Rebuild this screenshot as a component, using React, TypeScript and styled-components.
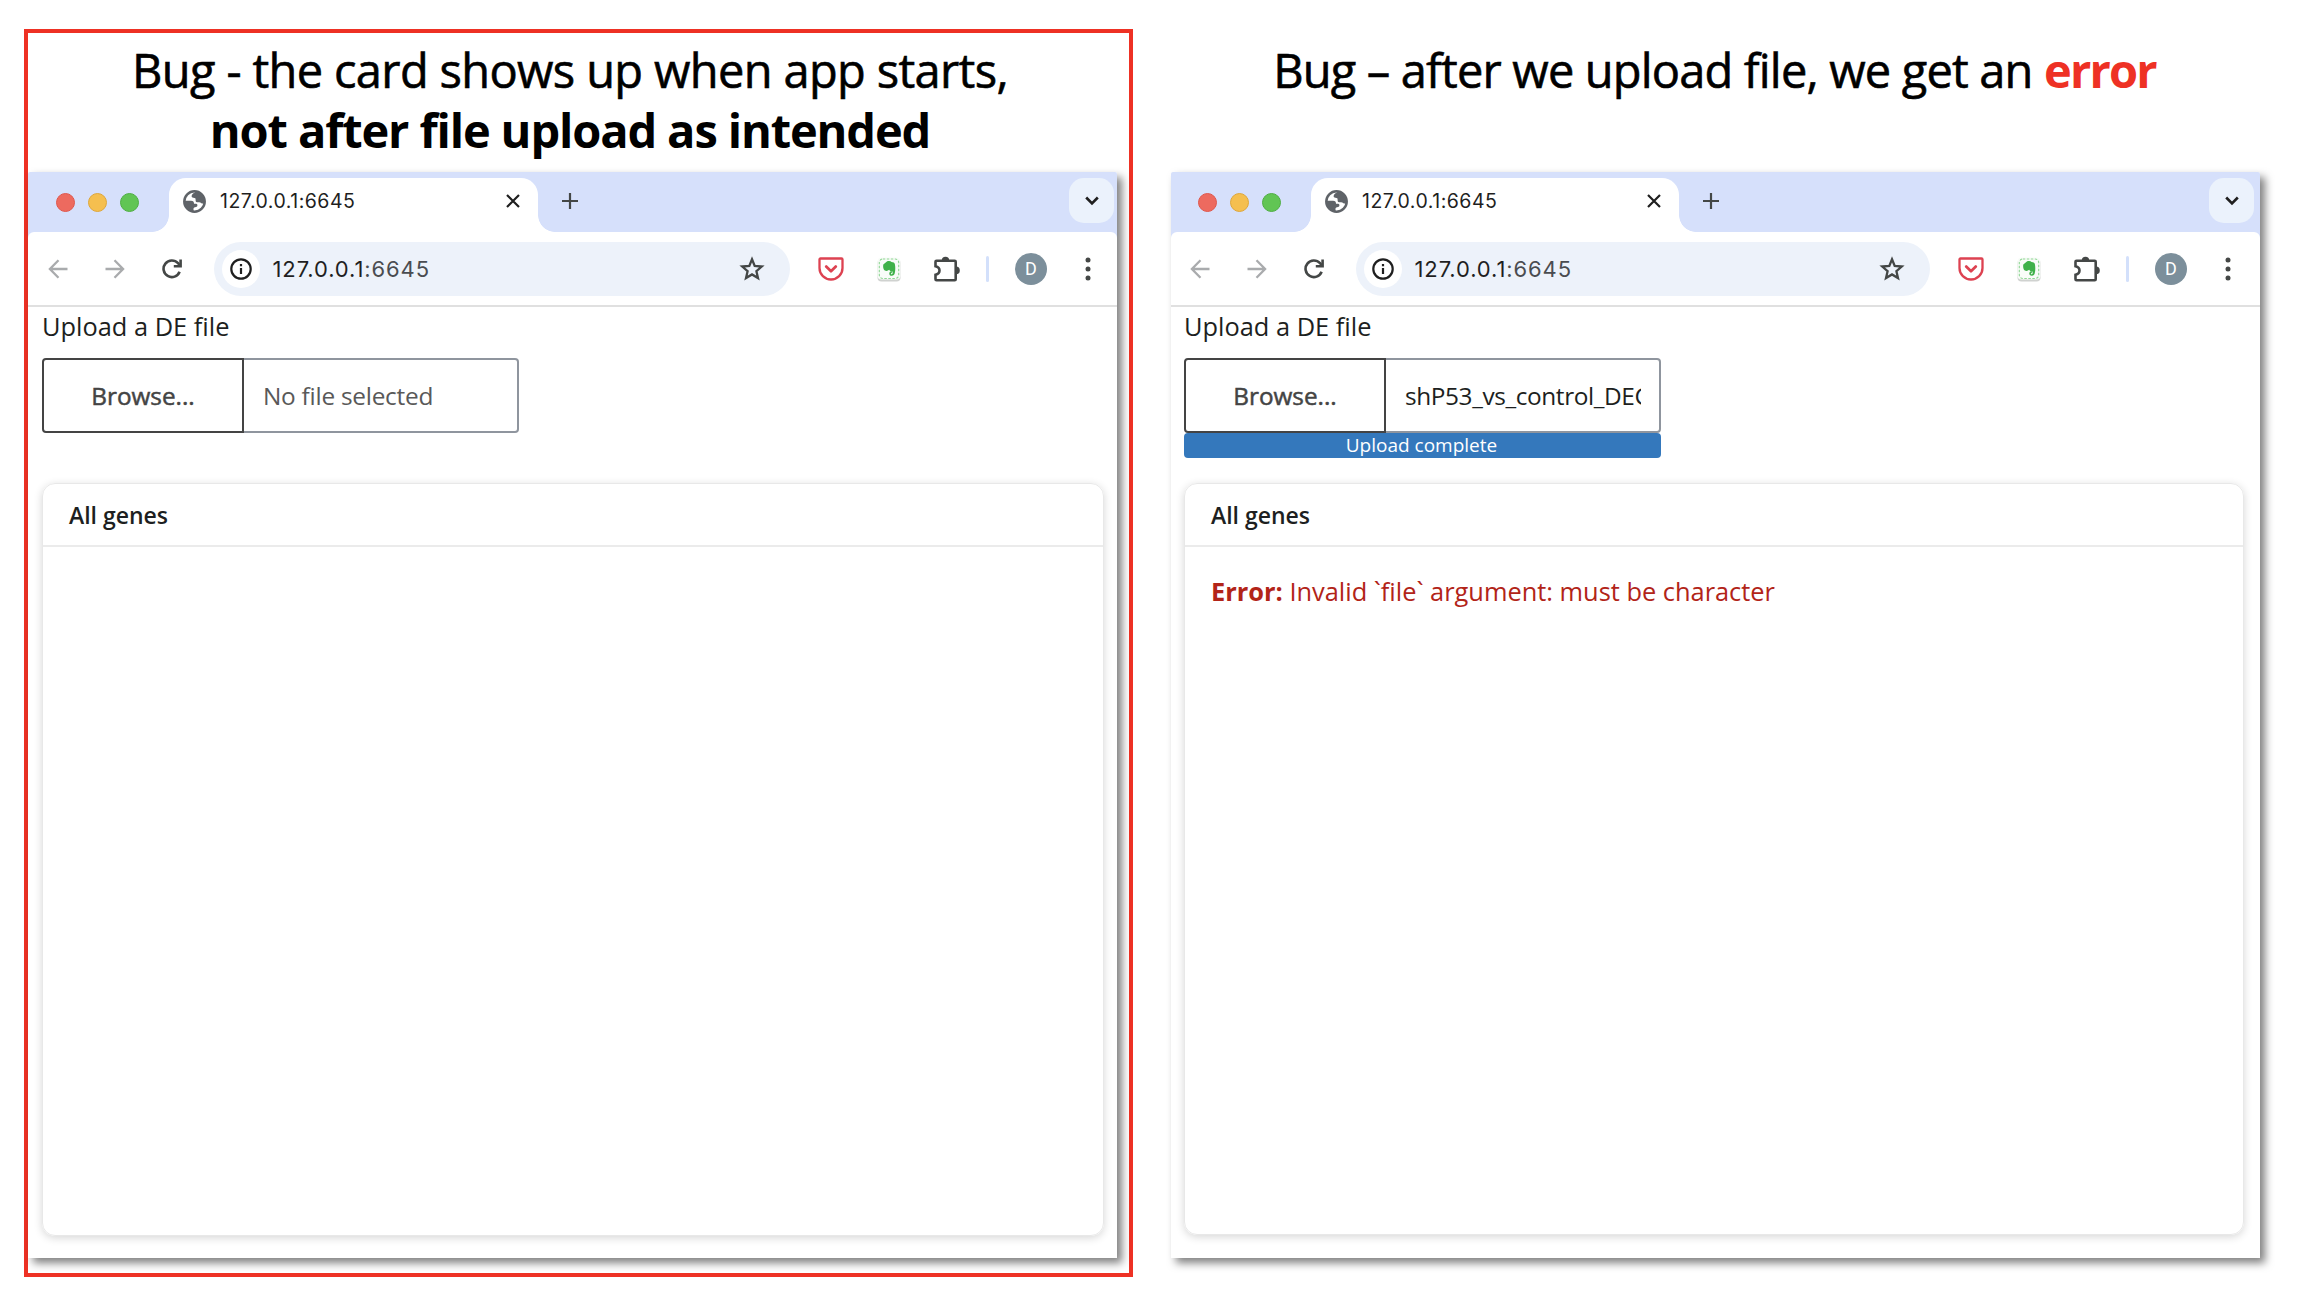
import React from "react";
import styled, { createGlobalStyle } from "styled-components";

const Global = createGlobalStyle`
  * { box-sizing: border-box; }
  body { margin: 0; background: #fff; }
`;

const Slide = styled.main`
  display: flex;
  width: 2300px;
  height: 1290px;
  padding: 29px 0 13px 24px;
  gap: 34px;
  background: #fff;
  overflow: hidden;
  font-family: "Open Sans", "Noto Sans", sans-serif;
`;

const Panel = styled.section<{ $framed?: boolean }>`
  display: flex;
  flex-direction: column;
  width: 1109px;
  height: 1248px;
  border: 4px solid ${(p) => (p.$framed ? "#ee3124" : "transparent")};
`;

const Heading = styled.header<{ $inset: number }>`
  display: flex;
  flex-direction: column;
  align-items: center;
  height: 139px;
  padding: 7px ${(p) => p.$inset}px 0 0;
  color: #000;
`;

const Line = styled.div<{ $track: number; $bold?: boolean }>`
  height: 60px;
  line-height: 60px;
  font-size: 47px;
  white-space: pre;
  font-weight: ${(p) => (p.$bold ? 700 : 400)};
  letter-spacing: ${(p) => p.$track}px;
  -webkit-text-stroke: ${(p) => (p.$bold ? 0 : 0.6)}px #000;
`;

const Alert = styled.b`
  color: #ee3124;
  letter-spacing: -1.8px;
  -webkit-text-stroke: 0;
`;

const Window = styled.div`
  display: flex;
  flex-direction: column;
  width: 1089px;
  height: 1086px;
  border-radius: 2px 2px 0 0;
  background: #fff;
  box-shadow: 5px 5px 9px rgba(0, 0, 0, 0.5);
`;

const Chrome = styled.div`
  border-radius: 2px 2px 0 0;
  background: #d6e0fb;
`;

const TabStrip = styled.div`
  display: flex;
  height: 60px;
`;

const Lights = styled.div<{ $shift: number }>`
  display: flex;
  align-items: center;
  gap: 13px;
  width: ${(p) => 141 - p.$shift}px;
  padding-left: ${(p) => 28 - p.$shift}px;
`;

const Light = styled.span<{ $c: string; $b: string }>`
  width: 19px;
  height: 19px;
  border-radius: 50%;
  background: ${(p) => p.$c};
  border: 1px solid ${(p) => p.$b};
`;

const Tab = styled.div<{ $shift: number }>`
  position: relative;
  display: flex;
  align-items: center;
  width: ${(p) => 369 - p.$shift}px;
  height: 54px;
  margin-top: 6px;
  padding: 0 18px 8px 14px;
  border-radius: 17px 17px 0 0;
  background: #fff;
  &::before,
  &::after {
    content: "";
    position: absolute;
    bottom: 0;
    width: 17px;
    height: 17px;
  }
  &::before {
    left: -17px;
    background: radial-gradient(circle at 0 0, transparent 16.5px, #fff 17.2px);
  }
  &::after {
    right: -17px;
    background: radial-gradient(circle at 100% 0, transparent 16.5px, #fff 17.2px);
  }
`;

const TabTitle = styled.span`
  flex: 1;
  margin-left: 14px;
  font: 400 19.5px/24px Inter, sans-serif;
  letter-spacing: 0.5px;
  color: #1f1f1f;
`;

const NewTab = styled.div`
  display: flex;
  align-items: center;
  flex: 1;
  padding: 0 0 3px 24px;
`;

const TabSearch = styled.div<{ $edge: number }>`
  display: flex;
  align-items: center;
  justify-content: center;
  width: 45px;
  height: 45px;
  margin: 6px ${(p) => p.$edge}px 0 0;
  border-radius: 15px;
  background: #ebf2fc;
`;

const Toolbar = styled.div<{ $edge: number; $shift: number }>`
  display: flex;
  align-items: center;
  height: 75px;
  padding: 1px ${(p) => p.$edge}px 0 ${(p) => 20 - p.$shift}px;
  border-bottom: 2px solid #e0e0e0;
  border-radius: 6px 6px 0 0;
  background: #fff;
`;

const Nav = styled.div`
  display: flex;
  justify-content: space-between;
  width: 134px;
  margin-right: 32px;
`;

const Omnibox = styled.div`
  display: flex;
  align-items: center;
  flex: 1;
  height: 54px;
  padding: 0 25px 0 8px;
  border-radius: 27px;
  background: #edf2fa;
`;

const SiteInfo = styled.span`
  display: flex;
  align-items: center;
  justify-content: center;
  width: 38px;
  height: 38px;
  border-radius: 50%;
  background: #fff;
`;

const Address = styled.span`
  flex: 1;
  margin-left: 12.5px;
  font: 400 22px/28px Inter, sans-serif;
  letter-spacing: 0.9px;
  color: #1f1f1f;
`;

const Port = styled.span`
  color: #4a4c50;
`;

const Actions = styled.div`
  display: flex;
  align-items: center;
  width: 304px;
  padding-left: 28px;
`;

const Divider = styled.span`
  width: 3px;
  height: 26px;
  margin: 0 26px 0 25px;
  border-radius: 2px;
  background: #d3e0fb;
`;

const Avatar = styled.span`
  display: flex;
  align-items: center;
  justify-content: center;
  width: 32px;
  height: 32px;
  margin-right: 38px;
  border-radius: 50%;
  background: #7c8f9b;
  color: #fff;
  font: 400 18px/32px Roboto, sans-serif;
`;

const Page = styled.div<{ $edge: number; $shift: number }>`
  display: flex;
  flex-direction: column;
  flex: 1;
  padding: 2px ${(p) => p.$edge}px 0 ${(p) => 14 - p.$shift}px;
  color: #1d1f21;
`;

const Label = styled.label`
  height: 49px;
  font-size: 25.4px;
  line-height: 34px;
`;

const FileInput = styled.div`
  display: flex;
  width: 477px;
  height: 75px;
`;

const Browse = styled.button`
  flex: none;
  width: 202px;
  padding: 0;
  border: 2px solid #444;
  border-radius: 4px 0 0 4px;
  background: #fff;
  color: #444;
  font: 400 24.3px/34px "Open Sans", sans-serif;
  -webkit-text-stroke: 0.5px #444;
`;

const FileName = styled.div<{ $empty?: boolean }>`
  flex: 1;
  min-width: 0;
  padding: 0 18px 0 19px;
  border: 2px solid #8f959e;
  border-left: 0;
  border-radius: 0 4px 4px 0;
  font-size: 24.4px;
  line-height: 71px;
  letter-spacing: ${(p) => (p.$empty ? -0.25 : -0.4)}px;
  color: ${(p) => (p.$empty ? "#595959" : "#1d1f21")};
`;

const Clip = styled.div`
  overflow: hidden;
  white-space: nowrap;
`;

const Progress = styled.div`
  width: 477px;
  height: 25px;
  padding-right: 2px;
  border-radius: 4px;
  background: #3478bc;
  color: #fff;
  font-size: 19px;
  line-height: 25px;
  text-align: center;
`;

const InputArea = styled.div`
  height: 125px;
`;

const Card = styled.article<{ $h: number }>`
  height: ${(p) => p.$h}px;
  border: 1px solid #e8e8e8;
  border-radius: 13px;
  box-shadow: 0 2px 8px rgba(0, 0, 0, 0.16);
`;

const CardHeader = styled.h2`
  height: 63px;
  margin: 0;
  padding: 0 26px;
  border-bottom: 2px solid #ebebeb;
  font-size: 23px;
  font-weight: 600;
  line-height: 62px;
`;

const ErrorText = styled.p`
  margin: 26px;
  font-size: 25.4px;
  line-height: 36px;
  color: #b22418;
`;

const Globe = () => (
  <svg width="23" height="23" viewBox="0 0 23 23">
    <circle cx="11.5" cy="11.5" r="10.2" fill="#fff" stroke="#5f6368" strokeWidth="2.500" />
    <path d="M13 1.500C10.500 3 8.500 4.500 8.600 6.300c.1 1.500 1.200 1.500 2.900 1.700 1.500.2 1 1.700 1.200 2.900.2 1.400 1.500 1.500 3 1.300 1.800-.3 2.300.8 3.300 1.300.9.400 1.700-.3 2.500-1.500C22 7 18.500 2 13 1.500z" fill="#5f6368" />
    <path d="M1.500 10.800h6.500c2.300 0 3 1.200 3 3h2.200c1 0 1.200.8 1.200 1.800 0 1.300-1 1.700-2.300 1.700-1.500 0-1.600 1-1.600 2v1.900C5 20.800 1.300 16 1.500 10.800z" fill="#5f6368" />
  </svg>
);

const Cross = () => (
  <svg width="14" height="14" viewBox="0 0 14 14" fill="none" stroke="#1f1f1f" strokeWidth="2.200">
    <path d="M1 1l12 12M13 1L1 13" />
  </svg>
);

const Plus = () => (
  <svg width="16" height="16" viewBox="0 0 16 16" fill="none" stroke="#444746" strokeWidth="2.200">
    <path d="M8 0v16M0 8h16" />
  </svg>
);

const Chevron = () => (
  <svg width="14" height="10" viewBox="0 0 14 10" fill="none" stroke="#1f1f1f" strokeWidth="2.600">
    <path d="M1.200 1.500L7 7.500l5.800-6" />
  </svg>
);

const Arrow = ({ back }: { back?: boolean }) => (
  <svg width="20" height="20" viewBox="0 0 20 20" fill="none" stroke="#a9abad" strokeWidth="2.300">
    {back ? (
      <path d="M19.500 10H2M10.500 1.200L1.900 10l8.600 8.800" />
    ) : (
      <path d="M.5 10H18M9.500 1.200l8.600 8.800-8.600 8.800" />
    )}
  </svg>
);

const Reload = () => (
  <svg width="20" height="20" viewBox="0 0 20 20" fill="none" stroke="#444746" strokeWidth="2.600">
    <path d="M17.600 12.800A8.300 8.300 0 1 1 16 4.200L18 6.500" />
    <path d="M18.600.5V7.300H11.800" />
  </svg>
);

const Info = () => (
  <svg width="22" height="22" viewBox="0 0 22 22" fill="none" stroke="#1f1f1f" strokeWidth="2.200">
    <circle cx="11" cy="11" r="9.700" />
    <path d="M11 10v6M11 6v2.300" />
  </svg>
);

const Star = () => (
  <svg width="26" height="26" viewBox="0 0 26 26" fill="none" stroke="#444746" strokeWidth="2.300">
    <path d="M13 3.300l2.700 6.600 7.100.6-5.400 4.700 1.600 6.900-6-3.700-6 3.700 1.600-6.900-5.400-4.700 7.100-.6z" />
  </svg>
);

const Pocket = () => (
  <svg width="26" height="24" viewBox="0 0 26 24" fill="none" stroke="#dd4251" strokeLinecap="round" strokeLinejoin="round">
    <path d="M2.500 1.500h21q1 0 1 1v8.500a11.500 11.500 0 0 1-23 0V2.500q0-1 1-1z" strokeWidth="2.300" />
    <path d="M8.200 9.600L13 14.200l4.800-4.600" strokeWidth="2.800" />
  </svg>
);

const Evernote = () => (
  <svg width="24" height="25" viewBox="0 0 24 25">
    <rect x="0.500" y="2" width="23" height="22.500" rx="4" fill="#d0d2d0" />
    <rect x="0.500" y="0.500" width="23" height="22" rx="4" fill="#f9fcf9" />
    <rect x="2.300" y="2" width="19.400" height="19.500" rx="3.500" fill="none" stroke="#8fd694" strokeWidth="1.100" strokeDasharray="2.500 1.500" />
    <path
      d="M10.200 4.300c2-.5 3.600-.2 4.300.7 1.700.1 3.100.8 3.400 2.300.6 3 .5 6.200-.1 8.800-.4 1.800-1.400 2.700-3 2.700-1.700 0-2.600-1-2.500-2.400.1-1.500 1.200-2.200 2.500-2v1.500c-.7 0-1 .3-.9.8.1.5.5.6 1 .500 1-.3.9-2.200.3-3-.9.200-2.300-.1-3-1.400-1.700 1.700-4.600 1.400-5.500-.6-.6-1.400-.7-3.200-.4-4.700z"
      fill="#3fb14a"
    />
  </svg>
);

const Puzzle = () => (
  <svg width="28" height="27" viewBox="0 0 28 27">
    <path d="M3.500 4.800h18.200q1 0 1 1v17.500q0 1-1 1H3.500q-1 0-1-1v-4.500c2.500-.6 4-2 4-4.300s-1.500-3.700-4-4.300V5.800q0-1 1-1z" fill="none" stroke="#444746" strokeWidth="2.600" />
    <path d="M8.800 4.500a3.700 3.700 0 0 1 7.400 0zM23 10.600a3.800 3.800 0 0 1 0 7.600z" fill="#444746" />
  </svg>
);

const Dots = () => (
  <svg width="6" height="24" viewBox="0 0 6 24" fill="#444746">
    <circle cx="3" cy="3" r="2.500" />
    <circle cx="3" cy="12" r="2.500" />
    <circle cx="3" cy="21" r="2.500" />
  </svg>
);

const Gap = styled.span<{ $w: number }>`
  width: ${(p) => p.$w}px;
`;

type BrowserProps = { edge: number; shift: number; children: React.ReactNode };

const Browser = ({ edge, shift, children }: BrowserProps) => (
  <Window>
    <Chrome>
      <TabStrip>
        <Lights $shift={shift}>
          <Light $c="#ed6a5f" $b="#e0574c" />
          <Light $c="#f5bf4f" $b="#dfa73a" />
          <Light $c="#61c554" $b="#4fae43" />
        </Lights>
        <Tab $shift={shift}>
          <Globe />
          <TabTitle>127.0.0.1:6645</TabTitle>
          <Cross />
        </Tab>
        <NewTab>
          <Plus />
        </NewTab>
        <TabSearch $edge={edge}>
          <Chevron />
        </TabSearch>
      </TabStrip>
      <Toolbar $edge={edge + 20} $shift={shift}>
        <Nav>
          <Arrow back />
          <Arrow />
          <Reload />
        </Nav>
        <Omnibox>
          <SiteInfo>
            <Info />
          </SiteInfo>
          <Address>
            127.0.0.1<Port>:6645</Port>
          </Address>
          <Star />
        </Omnibox>
        <Actions>
          <Pocket />
          <Gap $w={33} />
          <Evernote />
          <Gap $w={32} />
          <Puzzle />
          <Divider />
          <Avatar>D</Avatar>
          <Dots />
        </Actions>
      </Toolbar>
    </Chrome>
    {children}
  </Window>
);

export default function App() {
  return (
    <>
      <Global />
      <Slide>
        <Panel $framed>
          <Heading $inset={17}>
            <Line $track={-0.65}>Bug - the card shows up when app starts,</Line>
            <Line $track={-1.13} $bold>
              not after file upload as intended
            </Line>
          </Heading>
          <Browser edge={3} shift={0}>
            <Page $edge={13} $shift={0}>
              <Label>Upload a DE file</Label>
              <InputArea>
                <FileInput>
                  <Browse>Browse...</Browse>
                  <FileName $empty>
                    <Clip>No file selected</Clip>
                  </FileName>
                </FileInput>
              </InputArea>
              <Card $h={753}>
                <CardHeader>All genes</CardHeader>
              </Card>
            </Page>
          </Browser>
        </Panel>
        <Panel>
          <Heading $inset={14}>
            <Line $track={-0.83}>
              Bug – after we upload file, we get an <Alert>error</Alert>
            </Line>
          </Heading>
          <Browser edge={6} shift={1}>
            <Page $edge={16} $shift={1}>
              <Label>Upload a DE file</Label>
              <InputArea>
                <FileInput>
                  <Browse>Browse...</Browse>
                  <FileName>
                    <Clip>shP53_vs_control_DEG.csv</Clip>
                  </FileName>
                </FileInput>
                <Progress>Upload complete</Progress>
              </InputArea>
              <Card $h={752}>
                <CardHeader>All genes</CardHeader>
                <ErrorText>
                  <b>Error:</b> Invalid `file` argument: must be character
                </ErrorText>
              </Card>
            </Page>
          </Browser>
        </Panel>
      </Slide>
    </>
  );
}
